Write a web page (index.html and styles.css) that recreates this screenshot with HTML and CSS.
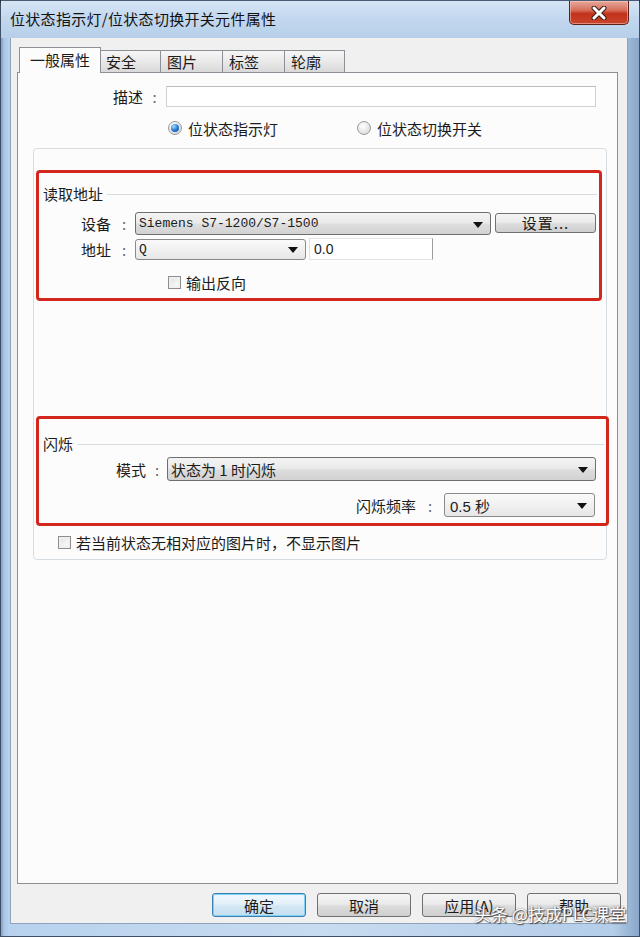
FILE: index.html
```html
<!DOCTYPE html>
<html lang="zh-CN">
<head>
    <meta charset="UTF-8">
    <meta name="viewport" content="width=device-width, initial-scale=1.0">
    <title>位状态指示灯/位状态切换开关元件属性</title>
    <link rel="stylesheet" href="styles.css">
</head>
<body>
    <div class="window">
        <div class="titlebar">
            <span class="title">位状态指示灯/位状态切换开关元件属性</span>
            <div class="close-btn">
                <svg width="18" height="14" viewBox="0 0 18 14">
                    <path d="M4 2 L14 12 M14 2 L4 12" stroke="#3a1a14" stroke-width="5" stroke-linecap="round"/>
                    <path d="M4 2 L14 12 M14 2 L4 12" stroke="#fff" stroke-width="3" stroke-linecap="round"/>
                </svg>
            </div>
        </div>

        <div class="client">
            <div class="tabs">
                <div class="tab active">一般属性</div>
                <div class="tab">安全</div>
                <div class="tab">图片</div>
                <div class="tab">标签</div>
                <div class="tab">轮廓</div>
            </div>

            <div class="panel">
                <div class="row desc-row">
                    <span class="lbl">描述</span><span class="colon">:</span>
                    <div class="textbox desc-input"></div>
                </div>

                <div class="row radio-row">
                    <div class="radio checked"><span class="radio-dot"></span>位状态指示灯</div>
                    <div class="radio second"><span class="radio-dot"></span>位状态切换开关</div>
                </div>

                <div class="group-outer">
                    <!-- 读取地址 -->
                    <div class="red-box read-box">
                        <div class="legend"><span>读取地址</span><i></i></div>
                        <div class="row dev-row">
                            <span class="lbl">设备</span><span class="colon">:</span>
                            <div class="combo dev-combo"><span class="mono">Siemens S7-1200/S7-1500</span><b class="arrow"></b></div>
                            <div class="btn small-btn">设置...</div>
                        </div>
                        <div class="row addr-row">
                            <span class="lbl">地址</span><span class="colon">:</span>
                            <div class="combo light addr-combo"><span class="mono">Q</span><b class="arrow"></b></div>
                            <div class="textbox addr-input">0.0</div>
                        </div>
                        <div class="row check-row inv-row">
                            <span class="checkbox"></span>输出反向
                        </div>
                    </div>

                    <!-- 闪烁 -->
                    <div class="red-box blink-box">
                        <div class="legend"><span>闪烁</span><i></i></div>
                        <div class="row mode-row">
                            <span class="lbl">模式</span><span class="colon">:</span>
                            <div class="combo mode-combo"><span>状态为 1 时闪烁</span><b class="arrow"></b></div>
                        </div>
                        <div class="row freq-row">
                            <span class="lbl">闪烁频率</span><span class="colon">:</span>
                            <div class="combo light freq-combo"><span>0.5 秒</span><b class="arrow"></b></div>
                        </div>
                    </div>

                    <div class="row check-row pic-row">
                        <span class="checkbox"></span>若当前状态无相对应的图片时，不显示图片
                    </div>
                </div>
            </div>

            <div class="buttons">
                <div class="btn dlg-btn default">确定</div>
                <div class="btn dlg-btn">取消</div>
                <div class="btn dlg-btn">应用(A)</div>
                <div class="btn dlg-btn">帮助</div>
            </div>
        </div>

        <div class="watermark">头条 @技成PLC课堂</div>
    </div>
</body>
</html>
```

FILE: styles.css
```css
/* ダイアログ全体 */
body {
    margin: 0;
    background: #2b3340;
    font-family: "Noto Sans CJK SC", "Liberation Sans", sans-serif;
    font-size: 15px;
    color: #1b1b1b;
}

.window {
    position: relative;
    width: 640px;
    height: 937px;
    box-sizing: border-box;
    display: flex;
    flex-direction: column;
    padding: 0 11px 12px 9px;
    background: linear-gradient(90deg, #7f9cc0 0px, #a9c6e8 3px, #b8d2ee 8px, #c8dcf0 50%, #b4cde9 96%, #8aa7c9 100%);
    border-left: 1px solid #3f4f66;
    border-right: 1px solid #3f4f66;
    border-bottom: 1px solid #3f4f66;
    border-radius: 5px 5px 0 0;
}

/* タイトルバー */
.titlebar {
    height: 38px;
    margin: 0 -11px 0 -9px;
    padding: 0 10px 0 9px;
    display: flex;
    align-items: flex-start;
    justify-content: space-between;
    background: linear-gradient(180deg, #d6e5f5 0%, #c3d8ef 45%, #b7cfea 100%);
    border-top: 1px solid #4a5c74;
    box-sizing: border-box;
}

.title {
    margin-top: 7px;
    font-size: 15px;
    color: #111;
    letter-spacing: 0.3px;
}

.close-btn {
    width: 58px;
    height: 23px;
    display: flex;
    align-items: center;
    justify-content: center;
    background: linear-gradient(180deg, #e8a99b 0%, #d6705c 40%, #c2311c 55%, #c9462c 100%);
    border: 1px solid #5b2219;
    border-top: none;
    border-radius: 0 0 5px 5px;
    box-shadow: inset 0 0 0 1px rgba(255, 210, 200, 0.5);
}

/* クライアント領域 */
.client {
    flex: 1;
    background: #f0f0f0;
    border: 1px solid #8ea3bc;
    border-top: none;
    padding: 9px 9px 0 6px;
    display: flex;
    flex-direction: column;
}

.tabs {
    display: flex;
    align-items: flex-end;
    height: 25px;
    padding-left: 2px;
    position: relative;
    z-index: 1;
}

.tab {
    height: 22px;
    box-sizing: border-box;
    padding-left: 6px;
    line-height: 21px;
    border: 1px solid #8c8f96;
    border-bottom: none;
    border-left: none;
    background: linear-gradient(180deg, #f6f6f6 0%, #e9e9e9 50%, #d9d9d9 100%);
    width: 62px;
}

.tab:nth-child(2) { width: 60px; padding-left: 5px; }
.tab:last-child { width: 60px; }

.tab.active {
    width: 82px;
    height: 26px;
    margin-bottom: -1px;
    padding-left: 0;
    text-align: center;
    line-height: 24px;
    background: #fcfcfc;
    border-left: 1px solid #8c8f96;
    font-size: 15px;
}

.panel {
    height: 812px;
    box-sizing: border-box;
    background: #fcfcfc;
    border: 1px solid #8c8f96;
    padding-top: 13px;
}

/* 共通の行 */
.row {
    display: flex;
    align-items: center;
}

.colon {
    color: #666;
    text-align: center;
}

.textbox {
    height: 21px;
    box-sizing: border-box;
    background: #fff;
    border: 1px solid #d2d2d2;
    border-top-color: #bcbcbc;
}

.desc-row {
    padding-left: 95px;
}

.desc-row .lbl { width: 30px; }
.desc-row .colon { width: 23px; }
.desc-input { width: 430px; }

.radio-row {
    height: 20px;
    margin-top: 11px;
    padding-left: 150px;
}

.radio {
    display: flex;
    align-items: center;
}

.radio.second {
    margin-left: 79px;
}

.radio-dot {
    width: 14px;
    height: 14px;
    box-sizing: border-box;
    border-radius: 50%;
    border: 1px solid #9a9a9a;
    background: radial-gradient(circle at 40% 35%, #ffffff 0%, #e4e4e4 60%, #c9c9c9 100%);
    margin-right: 6px;
    position: relative;
}

.radio.checked .radio-dot::after {
    content: "";
    position: absolute;
    left: 2px;
    top: 2px;
    width: 8px;
    height: 8px;
    border-radius: 50%;
    background: radial-gradient(circle at 35% 30%, #a8dcff 0%, #2b7ed2 50%, #0d3f8a 100%);
}

/* 外側グループ */
.group-outer {
    margin: 10px 10px 0 15px;
    border: 1px solid #d6dde2;
    border-radius: 4px;
    padding-bottom: 7px;
}

.red-box {
    border: 3px solid #d3261d;
    border-radius: 4px;
    margin-left: 2px;
    box-sizing: border-box;
}

.legend {
    display: flex;
    align-items: center;
    height: 18px;
    padding: 0 2px 0 4px;
}

.legend i {
    flex: 1;
    height: 1px;
    background: #d5dde3;
    margin-left: 4px;
    margin-top: 2px;
}

.read-box {
    width: 566px;
    margin-top: 21px;
    padding: 11px 0 6px;
}

.read-box .row { padding-left: 42px; }
.read-box .lbl { width: 32px; text-align: left; }
.read-box .colon { width: 22px; }

.dev-row {
    margin-top: 10px;
    height: 23px;
}

.combo {
    height: 23px;
    box-sizing: border-box;
    display: flex;
    align-items: center;
    justify-content: space-between;
    padding: 0 7px 0 3px;
    border: 1px solid #6f6f6f;
    border-radius: 3px;
    background: linear-gradient(180deg, #f3f3f3 0%, #ebebeb 45%, #dddddd 55%, #d2d2d2 100%);
}

.combo.light {
    background: linear-gradient(180deg, #fafafa 0%, #f1f1f1 50%, #e6e6e6 100%);
    border-color: #8a8a8a;
}

.arrow {
    width: 0;
    height: 0;
    border-left: 5px solid transparent;
    border-right: 5px solid transparent;
    border-top: 6px solid #111;
    margin-top: 2px;
}

.mono {
    font-family: "Liberation Mono", monospace;
    font-size: 13px;
    letter-spacing: 0;
}

.dev-combo { width: 356px; }

.btn {
    box-sizing: border-box;
    display: flex;
    align-items: center;
    justify-content: center;
    border: 1px solid #707070;
    border-radius: 3px;
    background: linear-gradient(180deg, #f4f4f4 0%, #ebebeb 45%, #dcdcdc 55%, #cfcfcf 100%);
}

.small-btn {
    width: 101px;
    height: 20px;
    margin-left: 4px;
    margin-top: -2px;
    letter-spacing: 1px;
}

.addr-row {
    margin-top: 3px;
    height: 22px;
}

.addr-combo {
    width: 171px;
    height: 21px;
}

.addr-input {
    width: 124px;
    height: 22px;
    margin-left: 3px;
    padding-left: 4px;
    line-height: 20px;
    font-family: "Liberation Sans", sans-serif;
    font-size: 14px;
    border-color: #e2e2e2;
    border-right-color: #9c9c9c;
}

.check-row {
    height: 20px;
}

.checkbox {
    width: 13px;
    height: 13px;
    box-sizing: border-box;
    border: 1px solid #8e8e8e;
    background: linear-gradient(135deg, #dcdcdc 0%, #f4f4f4 60%, #ffffff 100%);
    box-shadow: inset 0 0 0 2px #f0f0f0;
    margin-right: 5px;
}

.read-box .inv-row {
    margin-top: 12px;
    padding-left: 129px;
}

.blink-box {
    width: 573px;
    margin-top: 115px;
    padding: 15px 0 6px;
}

.mode-row {
    margin-top: 5px;
    padding-left: 77px;
}

.mode-row .lbl { width: 31px; }
.mode-row .colon { width: 20px; }

.mode-combo {
    width: 429px;
    height: 24px;
}

.freq-row {
    margin-top: 12px;
    justify-content: flex-end;
    padding-right: 11px;
}

.freq-row .colon { width: 28px; }

.freq-combo {
    width: 151px;
    height: 24px;
    padding-left: 5px;
}

.freq-combo span {
    font-family: "Liberation Sans", "Noto Sans CJK SC", sans-serif;
}

.pic-row {
    margin-top: 6px;
    padding-left: 24px;
}

/* 下部ボタン */
.buttons {
    display: flex;
    justify-content: flex-end;
    gap: 11px;
    margin-top: 9px;
    margin-right: -3px;
}

.dlg-btn {
    width: 94px;
    height: 24px;
}

.dlg-btn.default {
    border-color: #3c7fb1;
    box-shadow: inset 0 0 0 1px #7fd0f5;
    background: linear-gradient(180deg, #f1f8fc 0%, #e3f0f8 45%, #d2e7f4 55%, #c5dfef 100%);
}

/* 透かし */
.watermark {
    position: absolute;
    left: 473px;
    top: 901px;
    font-size: 17px;
    color: #fff;
    text-shadow: 0 0 2px #555, 1px 1px 1px #444;
    white-space: nowrap;
}
```
